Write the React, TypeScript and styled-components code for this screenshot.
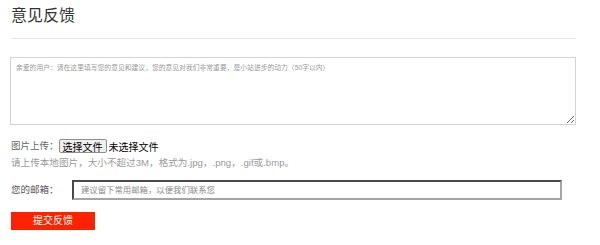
import React from "react";
import styled, { createGlobalStyle } from "styled-components";

const Global = createGlobalStyle`
  html, body { margin: 0; padding: 0; background: #fff; }
  body { font-family: "Liberation Sans", "Noto Sans CJK SC", sans-serif; }
  * { box-sizing: border-box; }
`;

const Page = styled.div`
  width: 576px;
  padding-left: 10px;
  display: flex;
  flex-direction: column;
`;

const Header = styled.div`
  margin-left: 1px;
  height: 39px;
  border-bottom: 1px solid #e6e6e6;
  display: flex;
  align-items: flex-start;
`;

const Title = styled.h1`
  margin: 5px 0 0 0;
  font-size: 16px;
  line-height: 22px;
  font-weight: normal;
  color: #333;
`;

const Area = styled.textarea`
  margin-top: 18px;
  width: 566px;
  height: 68px;
  border: 1px solid #d4d4d4;
  padding: 4px 5px;
  font-family: inherit;
  font-size: 6.8px;
  line-height: 12px;
  color: #333;
  resize: vertical;
  outline: none;
  &::placeholder { color: #9a9a9a; }
`;

const UploadRow = styled.div`
  margin-top: 14px;
  display: flex;
  align-items: center;
  height: 14px;
  margin-left: 1px;
`;

const Label = styled.span`
  font-size: 9.5px;
  line-height: 14px;
  color: #666;
  white-space: nowrap;
`;

const FileButton = styled.span`
  display: inline-flex;
  align-items: center;
  height: 14px;
  padding: 0 3px;
  border: 1px solid #8f8f8f;
  border-radius: 2px;
  background: #efefef;
  font-size: 10px;
  color: #000;
`;

const FileName = styled.span`
  margin-left: 2px;
  font-size: 10px;
  color: #000;
`;

const Hint = styled.div`
  margin-left: 1px;
  margin-top: 3px;
  font-size: 9.6px;
  line-height: 14px;
  color: #9a9a9a;
  white-space: nowrap;
`;

const EmailRow = styled.div`
  margin-top: 10px;
  margin-left: 1px;
  display: flex;
  align-items: center;
  height: 20px;
`;

const EmailLabel = styled(Label)`
  width: 61px;
  color: #555;
`;

const EmailInput = styled.input`
  width: 490px;
  height: 20px;
  border-style: solid;
  border-width: 2px;
  border-color: #4a4a4a #a5a5a5 #a5a5a5 #4a4a4a;
  padding: 0 7px;
  font-family: inherit;
  font-size: 8.4px;
  outline: none;
  &::placeholder { color: #8a8a8a; }
`;

const Submit = styled.button`
  margin-top: 12px;
  margin-left: 1px;
  width: 84px;
  height: 18px;
  border: none;
  background: #ff2200;
  color: #fff;
  font-family: inherit;
  font-size: 10px;
  line-height: 18px;
  padding: 0;
  cursor: pointer;
`;

export default function App() {
  return (
    <>
      <Global />
      <Page>
        <Header>
          <Title>意见反馈</Title>
        </Header>
        <Area placeholder="亲爱的用户：请在这里填写您的意见和建议，您的意见对我们非常重要，是小站进步的动力（50字以内）" />
        <UploadRow>
          <Label>图片上传：</Label>
          <FileButton>选择文件</FileButton>
          <FileName>未选择文件</FileName>
        </UploadRow>
        <Hint>请上传本地图片，大小不超过3M，格式为.jpg，.png，.gif或.bmp。</Hint>
        <EmailRow>
          <EmailLabel>您的邮箱：</EmailLabel>
          <EmailInput placeholder="建议留下常用邮箱，以便我们联系您" />
        </EmailRow>
        <div>
          <Submit>提交反馈</Submit>
        </div>
      </Page>
    </>
  );
}
